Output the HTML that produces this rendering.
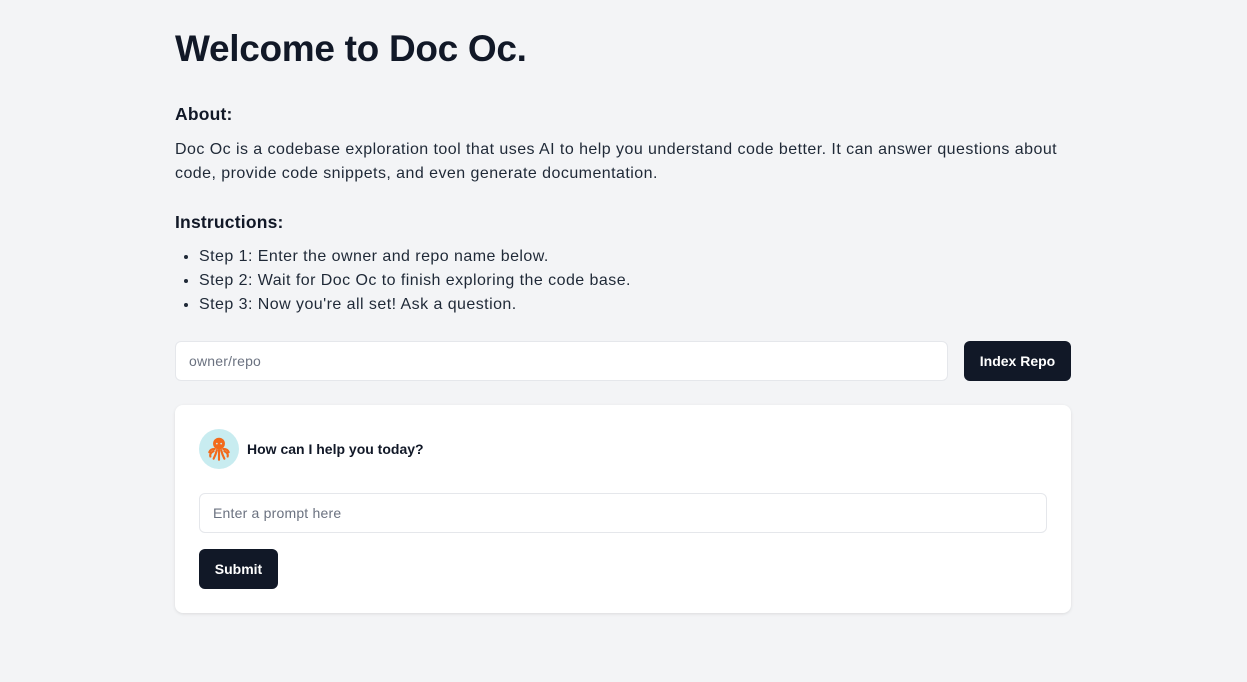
<!DOCTYPE html>
<html><head><style>
body{margin:0;background:#f3f4f6;font-family:"Liberation Sans",sans-serif;color:#111827;width:1247px;height:682px;overflow:hidden}
.w{position:absolute;left:175px;width:896px}
h1{position:absolute;left:175px;top:28px;margin:0;font-size:37px;font-weight:700;letter-spacing:-0.3px}
h2{margin:0;font-size:17.5px;font-weight:700;position:absolute;left:175px;letter-spacing:0.2px}
p{margin:0;font-size:16px;line-height:24px;color:#1f2937;letter-spacing:0.45px}
ul{margin:0;padding-left:24px;font-size:16px;line-height:24px;color:#1f2937;letter-spacing:0.45px}
.in{position:absolute;background:#fff;border:1px solid #e5e7eb;border-radius:6px;box-sizing:border-box;font-size:14px;color:#6b7280;padding-left:13px;display:flex;align-items:center;letter-spacing:0.2px}
.btn{position:absolute;background:#111827;color:#fff;font-weight:700;font-size:14px;border-radius:6px;display:flex;align-items:center;justify-content:center}
</style></head><body>
<h1>Welcome to Doc Oc.</h1>
<h2 style="top:104px">About:</h2>
<p class="w" style="top:138px">Doc Oc is a codebase exploration tool that uses AI to help you understand code better. It can answer questions about code, provide code snippets, and even generate documentation.</p>
<h2 style="top:212px">Instructions:</h2>
<ul class="w" style="top:245px"><li>Step 1: Enter the owner and repo name below.</li><li>Step 2: Wait for Doc Oc to finish exploring the code base.</li><li>Step 3: Now you're all set! Ask a question.</li></ul>
<div class="in" style="left:175px;top:341px;width:773px;height:40px">owner/repo</div>
<div class="btn" style="left:964px;top:341px;width:107px;height:40px">Index Repo</div>
<div style="position:absolute;left:175px;top:405px;width:896px;height:208px;background:#fff;border-radius:8px;box-shadow:0 1px 3px rgba(0,0,0,.1)">
<div style="position:absolute;left:24px;top:24px;width:40px;height:40px;border-radius:50%;background:#c8ecf0;display:flex;align-items:center;justify-content:center">
<svg width="28" height="28" viewBox="0 0 26 26" fill="none" stroke="#f26a1b" stroke-width="2" stroke-linecap="round"><ellipse cx="13" cy="8" rx="5.5" ry="5.5" fill="#f26a1b" stroke="none"/><circle cx="11" cy="8" r="0.8" fill="#c8ecf0" stroke="none"/><circle cx="15" cy="8" r="0.8" fill="#c8ecf0" stroke="none"/><path d="M9 13Q5 13 4 16M8 15Q4 17 5 20M11 14Q10 18 8 22M13 14V23M15 14Q16 18 18 22M18 15Q22 17 21 20M17 13Q21 13 22 16"/></svg></div>
<div style="position:absolute;left:72px;top:36px;font-size:14px;font-weight:700">How can I help you today?</div>
<div class="in" style="left:24px;top:88px;width:848px;height:40px">Enter a prompt here</div>
<div class="btn" style="left:24px;top:144px;width:79px;height:40px">Submit</div>
</div>
</body></html>
